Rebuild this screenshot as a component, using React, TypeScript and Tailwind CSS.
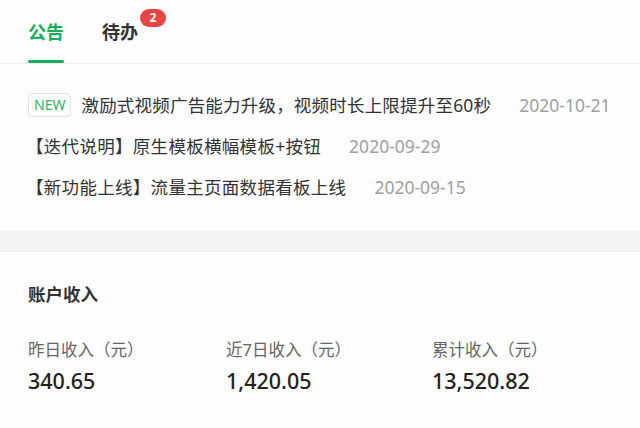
import React from 'react';

const notices = [
  { tag: 'NEW', title: '激励式视频广告能力升级，视频时长上限提升至60秒', date: '2020-10-21' },
  { title: '【迭代说明】原生模板横幅模板+按钮', date: '2020-09-29' },
  { title: '【新功能上线】流量主页面数据看板上线', date: '2020-09-15' },
];

const income = [
  { label: '昨日收入（元）', value: '340.65' },
  { label: '近7日收入（元）', value: '1,420.05' },
  { label: '累计收入（元）', value: '13,520.82' },
];

export default function App() {
  return (
    <div
      className="w-[640px] h-[428px] overflow-hidden bg-[#f3f3f4]"
      style={{ fontFamily: '"Noto Sans", "Noto Sans CJK SC", sans-serif' }}
    >
      {/* Notice card */}
      <div className="bg-[#fdfdfe] h-[231px]">
        <div className="flex items-end gap-[38px] px-[28px] h-[64px] border-b border-[#ededed]">
          <div className="relative flex flex-col items-center">
            <span className="text-[18px] font-bold text-[#1aad5a] leading-none mb-[19px]">公告</span>
            <div className="h-[3px] w-[36px] bg-[#1aad5a] rounded-full"></div>
          </div>
          <div className="relative flex flex-col items-center">
            <span className="text-[18px] font-bold text-[#333] leading-none mb-[22px]">待办</span>
            <span className="absolute left-[38px] top-[-14px] h-[18px] min-w-[26px] px-[6px] rounded-full bg-[#e54545] text-white text-[12px] font-bold leading-[18px] text-center">
              2
            </span>
          </div>
        </div>
        <div className="px-[28px] pt-[29px] flex flex-col gap-[17px]">
          {notices.map((n) => (
            <div key={n.date} className="flex items-center h-[24px] text-[17.5px] text-[#333]">
              {n.tag && (
                <span className="mr-[10px] h-[24px] px-[5px] border border-[#e3e3e3] rounded-[4px] text-[14px] text-[#2bb36a] leading-[22px]">
                  {n.tag}
                </span>
              )}
              <span className={n.tag ? 'tracking-[0.2px]' : 'ml-[-2px] tracking-[0.3px]'}>{n.title}</span>
              <span className="ml-[28px] text-[#a0a0a0]">{n.date}</span>
            </div>
          ))}
        </div>
      </div>

      {/* Income card */}
      <div className="mt-[20px] bg-[#fdfdfe] border-t border-[#ebebeb] h-[200px] px-[28px]">
        <div className="pt-[29px] text-[17.5px] font-bold text-[#333]">账户收入</div>
        <div className="mt-[33px] grid grid-cols-[198px_206px_1fr]">
          {income.map((it) => (
            <div key={it.label}>
              <div className="text-[16.5px] text-[#666] leading-[20px]">{it.label}</div>
              <div className="mt-[9px] text-[21.5px] font-medium text-[#222] leading-[24px]">{it.value}</div>
            </div>
          ))}
        </div>
      </div>
    </div>
  );
}
